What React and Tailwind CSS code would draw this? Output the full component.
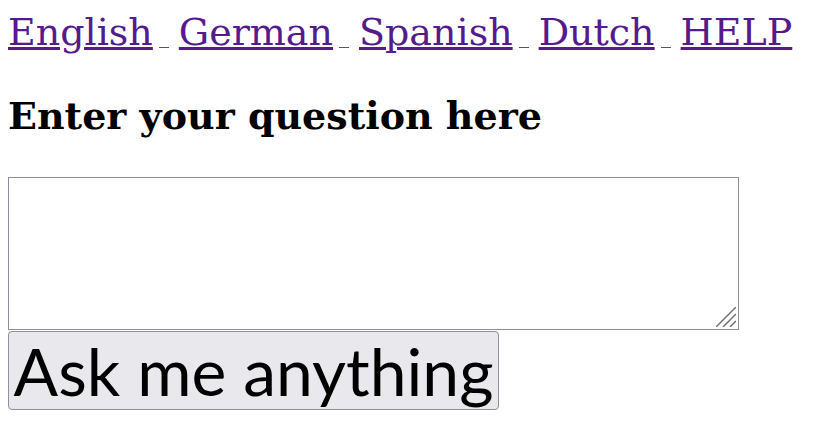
import React from 'react';

const languages = ['English', 'German', 'Spanish', 'Dutch', 'HELP'];

const Separator = () => (
  <span className="inline-block w-[10px] h-px bg-[#555] ml-[6px] mr-[10px] translate-y-[3px]"></span>
);

const ResizeGrip = () => (
  <svg className="absolute right-[3px] bottom-[3px]" width="20" height="20" viewBox="0 0 20 20">
    <g stroke="#707070" strokeWidth="1.4">
      <line x1="0" y1="20" x2="20" y2="0" />
      <line x1="7" y1="20" x2="20" y2="7" />
      <line x1="14" y1="20" x2="20" y2="14" />
    </g>
  </svg>
);

export default function App() {
  return (
    <div className="p-2 bg-white min-h-screen font-['DejaVu_Serif',serif] text-black">
      {/* Language links */}
      <div className="flex items-baseline text-[38px] leading-[44px] mt-[2px]">
        {languages.map((lang, i) => (
          <React.Fragment key={lang}>
            <a href="#" className="text-[#551a8b] underline decoration-[#551a8b]">
              {lang}
            </a>
            {i < languages.length - 1 && <Separator />}
          </React.Fragment>
        ))}
      </div>

      <h2 className="text-[38px] font-bold leading-[44px] mt-[40px]">Enter your question here</h2>

      <div className="relative w-[731px] mt-[39px]">
        <textarea className="block w-[731px] h-[153px] border border-[#8f8f9d] bg-white resize-none outline-none" />
        <ResizeGrip />
      </div>

      <button className="block mt-px w-[491px] h-[79px] border border-[#8f8f9d] rounded-[4px] bg-[#e9e9ed] font-['Lato',sans-serif] text-[66px] leading-[77px] text-black text-center whitespace-nowrap">
        Ask me anything
      </button>
    </div>
  );
}
